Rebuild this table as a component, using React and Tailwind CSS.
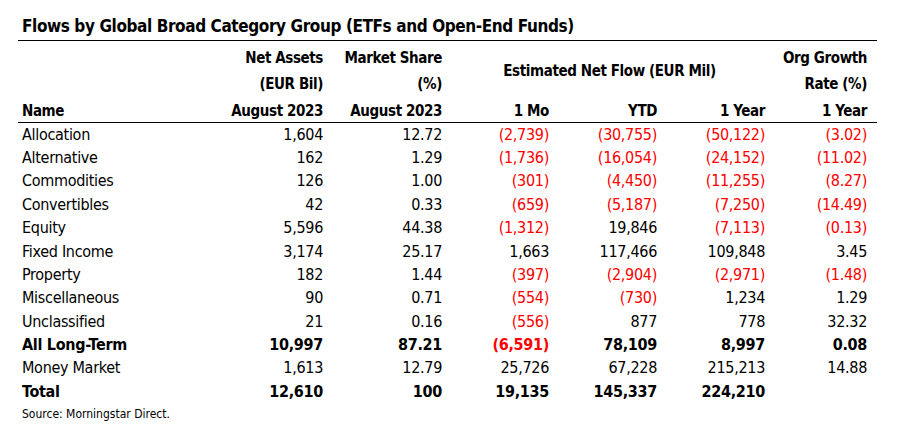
import React from 'react';

const rows = [
  ['Allocation', '1,604', '12.72', '(2,739)', '(30,755)', '(50,122)', '(3.02)'],
  ['Alternative', '162', '1.29', '(1,736)', '(16,054)', '(24,152)', '(11.02)'],
  ['Commodities', '126', '1.00', '(301)', '(4,450)', '(11,255)', '(8.27)'],
  ['Convertibles', '42', '0.33', '(659)', '(5,187)', '(7,250)', '(14.49)'],
  ['Equity', '5,596', '44.38', '(1,312)', '19,846', '(7,113)', '(0.13)'],
  ['Fixed Income', '3,174', '25.17', '1,663', '117,466', '109,848', '3.45'],
  ['Property', '182', '1.44', '(397)', '(2,904)', '(2,971)', '(1.48)'],
  ['Miscellaneous', '90', '0.71', '(554)', '(730)', '1,234', '1.29'],
  ['Unclassified', '21', '0.16', '(556)', '877', '778', '32.32'],
  ['All Long-Term', '10,997', '87.21', '(6,591)', '78,109', '8,997', '0.08', true],
  ['Money Market', '1,613', '12.79', '25,726', '67,228', '215,213', '14.88'],
  ['Total', '12,610', '100', '19,135', '145,337', '224,210', '', true],
];

const font = { fontFamily: '"DejaVu Sans Condensed", "Liberation Sans Narrow", "Roboto", sans-serif' };

const cols = 'grid grid-cols-[202px_103px_119px_107px_108px_108px_112px]';

export default function App() {
  return (
    <div className="w-[902px] h-[446px] bg-white text-black" style={font}>
      <div className="pl-[22px] pt-[15px] h-[40px] text-[17px] font-bold leading-[22px] tracking-[-0.4px]">
        Flows by Global Broad Category Group (ETFs and Open-End Funds)
      </div>

      <div className="ml-[18px] w-[859px] border-t border-black">
        {/* header */}
        <div className={`${cols} grid-rows-[26.3px_26.3px_26.3px] pt-[2px] text-[15px] font-bold leading-[20px] tracking-[-0.4px] border-b border-black`}>
          <div />
          <div className="text-right self-center pt-[4px]">Net Assets</div>
          <div className="text-right self-center pt-[4px]">Market Share</div>
          <div className="col-span-3 row-span-2 self-center text-center pt-[4px] pl-[12px]">Estimated Net Flow (EUR Mil)</div>
          <div className="text-right self-center pt-[4px] pr-[10px]">Org Growth</div>

          <div />
          <div className="text-right self-center pt-[4px]">(EUR Bil)</div>
          <div className="text-right self-center pt-[4px]">(%)</div>
          <div className="text-right self-center pt-[4px] pr-[10px]">Rate (%)</div>

          <div className="self-center pt-[4px] pl-[4px]">Name</div>
          <div className="text-right self-center pt-[4px]">August 2023</div>
          <div className="text-right self-center pt-[4px]">August 2023</div>
          <div className="text-right self-center pt-[4px]">1 Mo</div>
          <div className="text-right self-center pt-[4px]">YTD</div>
          <div className="text-right self-center pt-[4px]">1 Year</div>
          <div className="text-right self-center pt-[4px] pr-[10px]">1 Year</div>
        </div>

        {/* body */}
        <div className="text-[16px] leading-[20px] tracking-[-0.3px]">
          {rows.map(r => (
            <div key={r[0]} className={`${cols} h-[23.4px] items-center ${r[7] ? 'font-bold' : ''}`}>
              <div className="pl-[4px] whitespace-nowrap">{r[0]}</div>
              {r.slice(1, 7).map((v, i) => (
                <div
                  key={i}
                  className={`text-right whitespace-nowrap ${v.startsWith('(') ? 'text-[#ff0000]' : ''} ${i === 5 ? 'pr-[10px]' : ''}`}
                >
                  {v}
                </div>
              ))}
            </div>
          ))}
        </div>
      </div>

      <div className="pl-[22px] pt-[2px] text-[12px] leading-[16px]">Source: Morningstar Direct.</div>
    </div>
  );
}
